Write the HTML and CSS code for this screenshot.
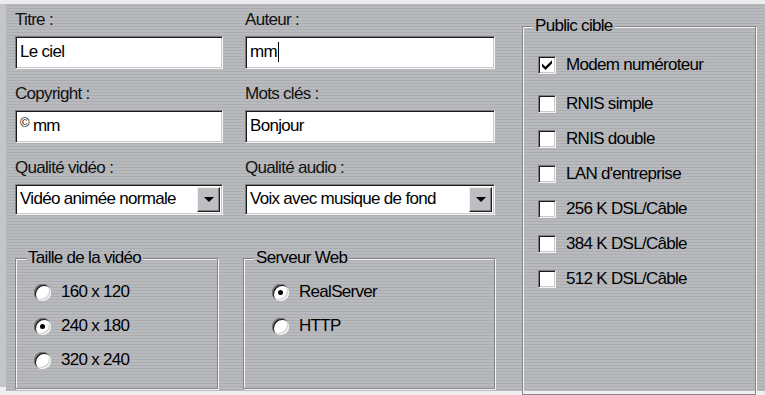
FILE: index.html
```html
<!DOCTYPE html>
<html lang="fr">
<head>
    <meta charset="UTF-8">
    <title>Propriétés du clip</title>
    <link rel="stylesheet" href="styles.css">
</head>
<body>

<div class="panel">
    <div class="fields">
        <div class="field">
            <div class="label">Titre :</div>
            <div class="edit">Le ciel</div>
        </div>
        <div class="field">
            <div class="label">Auteur :</div>
            <div class="edit"><span class="caret">mm</span></div>
        </div>
        <div class="field">
            <div class="label">Copyright :</div>
            <div class="edit"><span class="copy">©</span>&nbsp;mm</div>
        </div>
        <div class="field">
            <div class="label">Mots clés :</div>
            <div class="edit">Bonjour</div>
        </div>
        <div class="field">
            <div class="label">Qualité vidéo :</div>
            <div class="combo">
                <span class="combo-text">Vidéo animée normale</span>
                <span class="drop"><span class="arrow"></span></span>
            </div>
        </div>
        <div class="field">
            <div class="label">Qualité audio :</div>
            <div class="combo">
                <span class="combo-text">Voix avec musique de fond</span>
                <span class="drop"><span class="arrow"></span></span>
            </div>
        </div>

        <!-- Groupes d'options -->
        <div class="frame frame-size">
            <div class="legend">Taille de la vidéo</div>
            <div class="options">
                <div class="opt"><span class="radio"></span>160 x 120</div>
                <div class="opt"><span class="radio on"></span>240 x 180</div>
                <div class="opt"><span class="radio"></span>320 x 240</div>
            </div>
        </div>
        <div class="frame frame-server">
            <div class="legend">Serveur Web</div>
            <div class="options">
                <div class="opt"><span class="radio on"></span>RealServer</div>
                <div class="opt"><span class="radio"></span>HTTP</div>
            </div>
        </div>
    </div>

    <div class="frame frame-audience">
        <div class="legend">Public cible</div>
        <div class="checks">
            <div class="chk first">
                <span class="box">
                    <svg width="10" height="10" viewBox="0 0 7 7"><path d="M0 2.4 L2.4 4.8 L7 0.2 L7 2.4 L2.4 7 L0 4.6 Z" fill="#000"/></svg>
                </span>Modem numéroteur
            </div>
            <div class="chk"><span class="box"></span>RNIS simple</div>
            <div class="chk"><span class="box"></span>RNIS double</div>
            <div class="chk"><span class="box"></span>LAN d'entreprise</div>
            <div class="chk"><span class="box"></span>256 K DSL/Câble</div>
            <div class="chk"><span class="box"></span>384 K DSL/Câble</div>
            <div class="chk"><span class="box"></span>512 K DSL/Câble</div>
        </div>
    </div>
</div>

</body>
</html>
```

FILE: styles.css
```css
:root {
    --stripes: repeating-linear-gradient(to bottom, #b9babe 0 2px, #abadb0 2px 3px);
}
body {
    margin: 0;
    height: 395px;
    box-sizing: border-box;
    overflow: hidden;
    background: linear-gradient(to bottom, #c4c5c8 387px, #eeeeee 387px);
    border-top: 4px solid #ececec;
    font-family: "Liberation Sans", Arial, sans-serif;
    font-size: 17px;
    letter-spacing: -0.7px;
    color: #000;
}
.panel {
    margin-left: 6px;
    height: 387px;
    box-sizing: border-box;
    padding: 6px 0 0 9px;
    display: flex;
    align-items: flex-start;
    background: var(--stripes);
    background-attachment: fixed;
}
.fields {
    display: grid;
    grid-template-columns: 208px 250px;
    column-gap: 22px;
    row-gap: 15px;
    align-items: start;
}
.label {
    line-height: 20px;
    margin-bottom: 6px;
    color: #111;
}
/* sunken edit box */
.edit, .combo {
    height: 33px;
    box-sizing: border-box;
    background: #fff;
    border: 1px solid;
    border-color: #7d7e81 #f4f4f4 #f4f4f4 #7d7e81;
    box-shadow: inset 1px 1px 0 #1a1a1a, inset -1px -1px 0 #c9cacd;
    display: flex;
    align-items: center;
    padding: 0 4px 2px;
    white-space: nowrap;
}
.caret {
    border-right: 1px solid #000;
    padding-right: 1px;
    line-height: 20px;
}
.copy {
    font-size: 13px;
    position: relative;
    top: -3px;
}
.combo {
    height: 31px;
    padding: 0 2px 0 4px;
}
.combo-text {
    flex: 1;
    padding-bottom: 2px;
}
.drop {
    width: 23px;
    height: 25px;
    box-sizing: border-box;
    background: #bdbec1;
    border: 1px solid;
    border-color: #f2f2f2 #202020 #202020 #f2f2f2;
    box-shadow: inset -1px -1px 0 #808184;
    display: flex;
    align-items: center;
    justify-content: center;
}
.arrow {
    width: 0;
    height: 0;
    border-left: 5px solid transparent;
    border-right: 5px solid transparent;
    border-top: 5px solid #000;
}
/* etched group box */
.frame {
    border: 1px solid #86878a;
    box-shadow: inset 1px 1px 0 #f3f3f3, 1px 1px 0 #f3f3f3;
    box-sizing: border-box;
}
.legend {
    width: fit-content;
    margin: -11px 0 0 10px;
    padding: 0 2px;
    line-height: 20px;
    background: var(--stripes);
    background-attachment: fixed;
}
.frame-size {
    width: 203px;
    height: 131px;
    margin-top: 28px;
}
.frame-server {
    width: 252px;
    height: 131px;
    margin: 28px 0 0 -2px;
}
.frame-audience {
    width: 234px;
    height: 369px;
    margin: 16px 0 0 27px;
}
.options {
    padding: 7px 0 0 18px;
}
.frame-server .options {
    padding-left: 28px;
}
.opt {
    height: 34px;
    display: flex;
    align-items: center;
    gap: 10px;
}
.radio {
    width: 17px;
    height: 17px;
    border-radius: 50%;
    background: #fff;
    box-shadow: inset 1px 1px 0 #7d7e81, inset 2px 2px 0 #1a1a1a, inset -1px -1px 0 #f4f4f4, inset -2px -2px 0 #cfd0d3;
    display: flex;
    align-items: center;
    justify-content: center;
}
.radio.on::after {
    content: "";
    width: 5px;
    height: 5px;
    border-radius: 50%;
    background: #000;
}
.checks {
    padding: 11px 0 0 15px;
}
.chk {
    height: 35px;
    display: flex;
    align-items: center;
    gap: 10px;
}
.chk.first {
    margin-bottom: 4px;
}
.box {
    width: 18px;
    height: 18px;
    box-sizing: border-box;
    background: #fff;
    border: 1px solid;
    border-color: #7d7e81 #f4f4f4 #f4f4f4 #7d7e81;
    box-shadow: inset 1px 1px 0 #1a1a1a, inset -1px -1px 0 #c9cacd;
    display: flex;
    align-items: center;
    justify-content: center;
}
```
